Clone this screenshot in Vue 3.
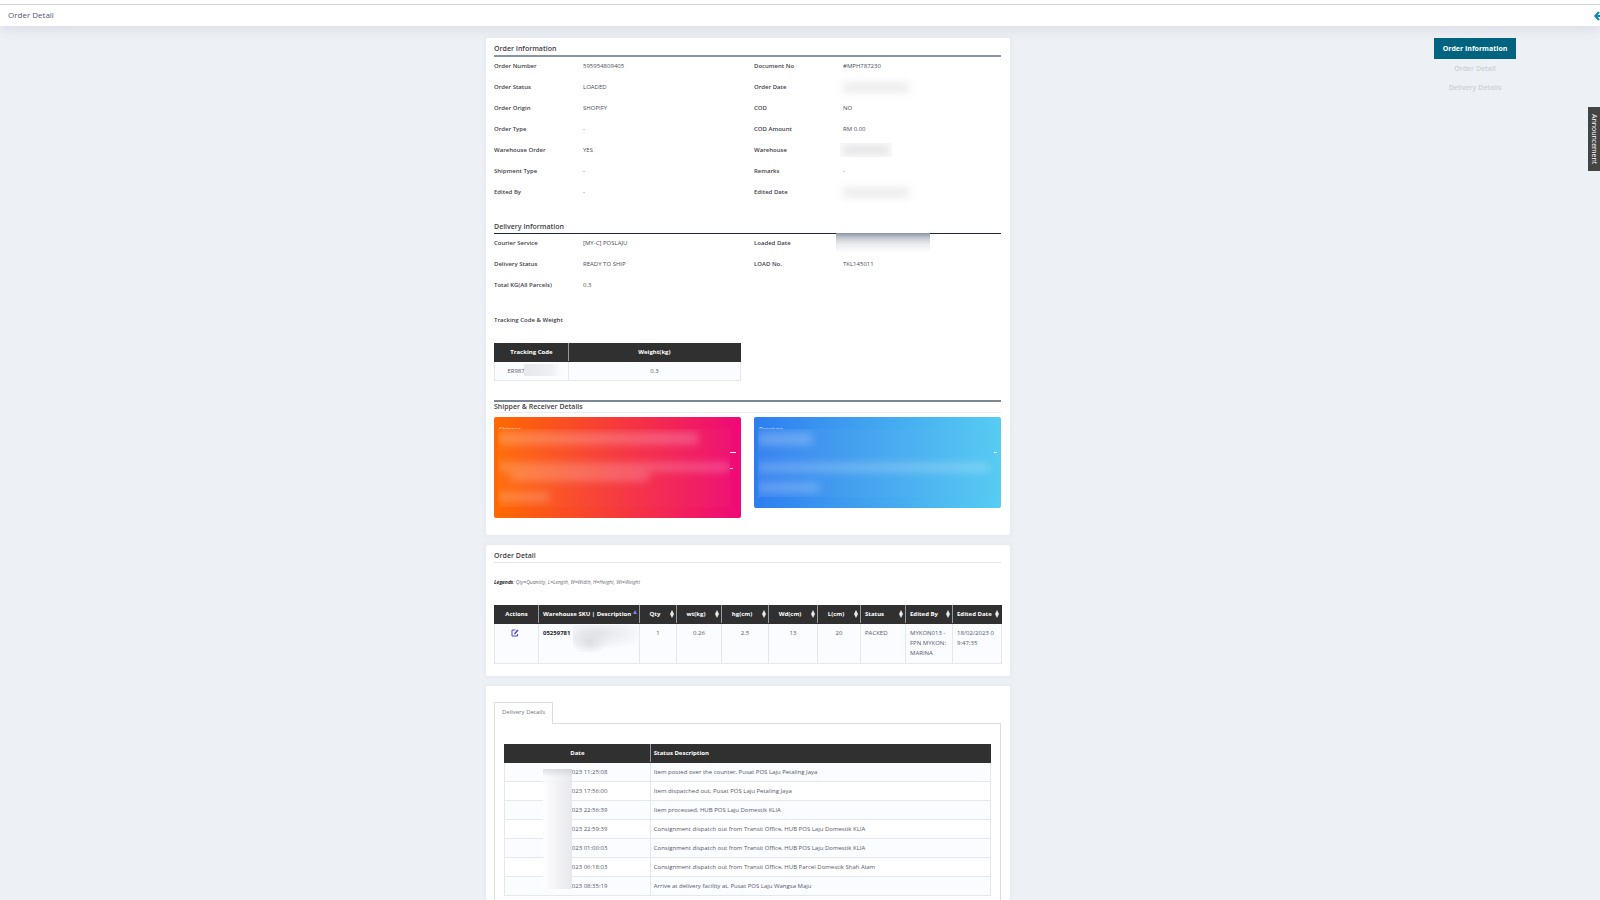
<script setup>
const orderLeft = [
  ['Order Number', '595954809405'],
  ['Order Status', 'LOADED'],
  ['Order Origin', 'SHOPIFY'],
  ['Order Type', '-'],
  ['Warehouse Order', 'YES'],
  ['Shipment Type', '-'],
  ['Edited By', '-'],
]
const orderRight = [
  ['Document No', '#MPH787230'],
  ['Order Date', null, 'wide'],
  ['COD', 'NO'],
  ['COD Amount', 'RM 0.00'],
  ['Warehouse', null, 'short'],
  ['Remarks', '-'],
  ['Edited Date', null, 'wide'],
]
const deliveryLeft = [
  ['Courier Service', '[MY-C] POSLAJU'],
  ['Delivery Status', 'READY TO SHIP'],
  ['Total KG(All Parcels)', '0.3'],
]
const deliveryRight = [
  ['Loaded Date', null, 'shade'],
  ['LOAD No.', 'TKL145011'],
]
const columns = ['Qty', 'wt(kg)', 'hg(cm)', 'Wd(cm)', 'L(cm)', 'Status', 'Edited By', 'Edited Date']
const values = ['1', '0.26', '2.5', '13', '20', 'PACKED', 'MYKON013 - FPN MYKON: MARINA', '18/02/2023 09:47:35']
const events = [
  ['023 11:25:08', 'Item posted over the counter, Pusat POS Laju Petaling Jaya'],
  ['023 17:56:00', 'Item dispatched out, Pusat POS Laju Petaling Jaya'],
  ['023 22:56:39', 'Item processed, HUB POS Laju Domestik KLIA'],
  ['023 22:59:39', 'Consignment dispatch out from Transit Office, HUB POS Laju Domestik KLIA'],
  ['023 01:00:03', 'Consignment dispatch out from Transit Office, HUB POS Laju Domestik KLIA'],
  ['023 06:18:03', 'Consignment dispatch out from Transit Office, HUB Parcel Domestik Shah Alam'],
  ['023 08:35:19', 'Arrive at delivery facility at, Pusat POS Laju Wangsa Maju'],
]
</script>

<template>
  <div class="page">
    <header class="topbar">
      <h1>Order Detail</h1>
      <a href="#" class="back" aria-label="Back">
        <svg viewBox="0 0 10 10"><path d="M5 1 1.4 5 5 9M1.6 5H10" fill="none" stroke="currentColor" stroke-width="2.2" /></svg>
      </a>
    </header>

    <div class="layout">
      <main>
        <section class="card info">
          <h2 class="thick">Order Information</h2>
          <div class="pair">
            <dl v-for="(list, i) in [orderLeft, orderRight]" :key="i">
              <div v-for="row in list" :key="row[0]">
                <dt>{{ row[0] }}</dt>
                <dd>{{ row[1] }}<span v-if="row[2]" class="mask" :class="row[2]"></span></dd>
              </div>
            </dl>
          </div>

          <h2 class="thin">Delivery Information</h2>
          <div class="pair">
            <dl v-for="(list, i) in [deliveryLeft, deliveryRight]" :key="i">
              <div v-for="row in list" :key="row[0]">
                <dt>{{ row[0] }}</dt>
                <dd>{{ row[1] }}<span v-if="row[2]" class="mask" :class="row[2]"></span></dd>
              </div>
            </dl>
          </div>

          <h3>Tracking Code &amp; Weight</h3>
          <div class="pair">
            <table class="tracking">
              <thead><tr><th>Tracking Code</th><th>Weight(kg)</th></tr></thead>
              <tbody><tr><td><span class="code">ER987<span class="mask tail"></span></span></td><td>0.3</td></tr></tbody>
            </table>
          </div>

          <h2 class="people">Shipper &amp; Receiver Details</h2>
          <div class="pair parties">
            <div class="party shipper">
              <h4>Shipper</h4>
              <div class="veil"><i class="s1"></i><i class="s2"></i><i class="s3"></i><i class="s4"></i></div>
              <span class="dash"></span><span class="dots"></span>
            </div>
            <div class="party receiver">
              <h4>Receiver</h4>
              <div class="veil"><i class="r1"></i><i class="r2"></i><i class="r3"></i></div>
              <span class="dash"></span>
            </div>
          </div>
        </section>

        <section class="card detail">
          <h2 class="light">Order Detail</h2>
          <p class="legend"><b>Legends</b>: Qty=Quantity, L=Length, W=Width, H=Height, Wt=Weight</p>
          <table class="items">
            <colgroup><col class="c0" /><col class="c1" /><col class="c2" /><col class="c3" /><col class="c4" /><col class="c5" /><col class="c6" /><col class="c7" /><col class="c8" /><col class="c9" /></colgroup>
            <thead>
              <tr>
                <th>Actions</th>
                <th class="left"><span class="head"><span>Warehouse SKU | Description</span><svg class="asc" viewBox="0 0 4 8"><path d="M0 4 2 0 4 4z" /></svg></span></th>
                <th v-for="(c, i) in columns" :key="c" :class="{ left: i > 4 }">
                  <span class="head"><span>{{ c }}</span><svg viewBox="0 0 4 8"><path d="M0 4 2 0 4 4 2 8z" /></svg></span>
                </th>
              </tr>
            </thead>
            <tbody>
              <tr>
                <td>
                  <button class="edit" aria-label="Edit">
                    <svg viewBox="0 0 16 16"><path d="M9 2H2v12h11V10" /><path d="M7 10 14 2" class="pen" /></svg>
                  </button>
                </td>
                <td class="left sku"><b>05259781</b><span class="mask blob"></span></td>
                <td v-for="(v, i) in values" :key="i" :class="{ left: i > 4 }">{{ v }}</td>
              </tr>
            </tbody>
          </table>
        </section>

        <section class="card delivery">
          <div role="tablist"><button role="tab" class="tab" aria-selected="true">Delivery Details</button></div>
          <div class="pane" role="tabpanel">
            <div class="log">
              <table>
                <colgroup><col class="when" /><col /></colgroup>
                <thead><tr><th>Date</th><th class="left">Status Description</th></tr></thead>
                <tbody>
                  <tr v-for="e in events" :key="e[0]"><td><span class="stamp">{{ e[0] }}</span></td><td class="left">{{ e[1] }}</td></tr>
                </tbody>
              </table>
              <span class="mask column"></span>
            </div>
          </div>
        </section>
      </main>

      <nav>
        <a href="#" class="active">Order Information</a>
        <a href="#">Order Detail</a>
        <a href="#">Delivery Details</a>
      </nav>
    </div>
    <button class="announce">Announcement</button>
  </div>
</template>

<style>
body { margin: 0; background: #edf1f6; }
</style>

<style scoped>
* { box-sizing: border-box; }
.page {
  position: relative; min-height: 100vh; display: flex; flex-direction: column; overflow: hidden;
  font: 6px/10px "Open Sans", "Noto Sans", sans-serif; color: #55586c; background: #edf1f6;
}
h1, h2, h3, h4, p, dl, dd { margin: 0; font-weight: 400; }
button { font: inherit; border: 0; padding: 0; cursor: pointer; }
a { text-decoration: none; }
.topbar {
  display: flex; align-items: center; justify-content: space-between; height: 22px; margin-top: 4px;
  padding-left: 8px; background: #fff; border-top: 1px solid #d4d4d6; box-shadow: 0 -4px #fff, 0 2px 14px rgba(70, 60, 80, .14);
}
h1 { font-size: 8px; color: #55567a; padding-bottom: 2px; }
.back { width: 6px; height: 10px; color: #0a8bb0; overflow: hidden; }
.back svg { display: block; width: 10px; height: 10px; }
.layout { flex: 1; display: grid; grid-template-columns: 486fr 524fr 465fr 125fr; padding-top: 12px; }
main { grid-column: 2; display: flex; flex-direction: column; gap: 10px; min-width: 0; }
.card { background: #fff; border-radius: 2px; padding: 0 9px 0 8px; box-shadow: 0 0 6px rgba(80, 90, 120, .07); }
h2 { font-size: 7px; line-height: 10px; font-weight: 600; color: #3f4047; }
.info { padding-top: 6px; padding-bottom: 17px; }
.thick { padding-bottom: 1px; border-bottom: 2px solid #8796a4; }
.thin { margin-top: 18px; padding-bottom: 1px; border-bottom: 1px solid #1b2a3f; }
.pair { display: grid; grid-template-columns: 1fr 1fr; column-gap: 13px; align-items: start; }
dl > div { display: grid; grid-template-columns: 89fr 158fr; height: 21px; padding-top: 4px; }
dt { font-weight: 600; color: #3f414a; white-space: nowrap; }
dd { position: relative; color: #4b4d57; }
.mask { position: absolute; pointer-events: none; }
.wide { left: 0; top: 1px; width: 66px; height: 9px; background: #e9e9eb; filter: blur(4px); }
.short { left: -3px; top: -2px; width: 52px; height: 14px; background: #f8f8f9; overflow: hidden; }
.short::after { content: ""; display: block; margin: 3px 4px; height: 8px; background: #e5e5e7; filter: blur(3px); }
.shade { left: -7px; top: -5px; width: 94px; height: 20px; background: linear-gradient(#8994a3, #c5cad1 25%, #e9ebed 55%, #fff); }
h3 { margin-top: 18px; margin-bottom: 18px; font-size: 6px; font-weight: 600; color: #3f414a; }
table { width: 100%; border-collapse: collapse; table-layout: fixed; }
th { height: 18px; padding: 0 4px 2px; background: #303030; color: #fff; font-weight: 700; border: 1px solid #303030; border-right-color: #97999d; border-left-color: #97999d; white-space: nowrap; }
th:first-child { border-left-color: #303030; }
th:last-child { border-right-color: #303030; }
td { height: 19px; padding: 0 4px 1px; border: 1px solid #e3e7ee; text-align: center; background: #fafcff; }
.left { text-align: left; }
.tracking th:first-child { width: 30%; }
.code { position: relative; display: inline-block; width: 48px; text-align: left; }
.tail { left: 17px; top: -2px; width: 38px; height: 12px; background: linear-gradient(90deg, #e7e8eb, #eeeff1 70%, #fafcff); }
.people { margin-top: 19px; border-top: 2px solid #7b8894; border-bottom: 1px solid #ececee; margin-bottom: 4px; }
.party { position: relative; height: 91px; padding: 7px 5px; border-radius: 2px; overflow: hidden; background: linear-gradient(90deg, #2d7ef0, #3d9aef 35%, #56cdf2); }
.party h4 { font-size: 6px; line-height: 10px; color: rgba(255, 255, 255, .8); }
.shipper { height: 101px; background: linear-gradient(90deg, #ff6a00, #f6393c 50%, #ee0979); }
.veil { position: absolute; left: 4px; right: 11px; top: 12px; bottom: 11px; background: linear-gradient(90deg, #ff6e0c, #f63c41 50%, #ef1374); overflow: hidden; }
.receiver .veil { right: 7px; background: linear-gradient(90deg, #3983f0, #439cef 35%, #56c9f2); }
.veil i { position: absolute; left: 0; background: rgba(255, 255, 255, .24); filter: blur(4px); }
.s1 { top: 4px; width: 86%; height: 11px; }
.s2 { top: 34px; width: 100%; height: 8px; }
.s3 { top: 43px; width: 60%; height: 9px; margin-left: 12px; }
.s4 { top: 64px; width: 22%; height: 8px; }
.r1 { top: 4px; width: 23%; height: 12px; }
.r2 { top: 34px; width: 98%; height: 9px; }
.r3 { top: 54px; width: 26%; height: 9px; }
.dash { position: absolute; right: 5px; top: 35px; width: 6px; height: 1px; background: #fff; }
.receiver .dash { right: 4px; width: 3px; }
.dots { position: absolute; right: 8px; top: 51px; width: 3px; height: 1px; background: #ffc4e0; }
.detail { padding-top: 6px; padding-bottom: 12px; }
.light { padding-bottom: 1px; border-bottom: 1px solid #e3e4e9; }
.legend { margin: 14px 0 18px; font-size: 5px; font-style: italic; color: #6a6c77; }
.legend b { color: #25262b; }
.items td { height: 40px; padding-top: 4px; vertical-align: top; }
.c0 { width: 44px; } .c1 { width: 101px; } .c2 { width: 37px; } .c3 { width: 45px; } .c4 { width: 47px; }
.c5 { width: 49px; } .c6 { width: 43px; } .c7 { width: 45px; } .c8 { width: 47px; } .c9 { width: 49px; }
.items th { padding: 0 0 2px; }
.items th.left { padding-left: 4px; }
.head { display: flex; align-items: center; padding-right: 2px; }
.head > span { flex: 1; }
.head svg { width: 4px; height: 8px; fill: #e8e8ea; flex: none; }
.head .asc { fill: #7b7df0; }
.items td.left { word-break: break-all; padding-right: 2px; }
.items td:nth-child(9) { word-break: normal; }
.items td:last-child { padding-right: 7px; }
.edit { width: 8px; height: 8px; background: none; display: block; margin: 1px auto 0 12px; }
.edit svg { display: block; width: 8px; height: 8px; fill: none; stroke: #4a48d8; stroke-width: 2; }
.edit .pen { stroke-width: 3; }
.sku { position: relative; }
.sku b { color: #25262b; }
.blob { left: 34px; top: 1px; width: 66px; height: 27px; background: radial-gradient(ellipse 30% 50% at 25% 60%, #dcdee3, transparent), radial-gradient(ellipse 75% 60% at 40% 30%, #e3e5e9, #fafcff); }
.delivery { flex: 1; display: flex; flex-direction: column; padding-top: 16px; }
.tab { position: relative; display: block; height: 22px; padding: 0 7px 3px; margin-bottom: -1px; color: #74767f; background: #fff; border: 1px solid #dcdde1; border-bottom: 0; border-radius: 1px 1px 0 0; }
.pane { flex: 1; padding: 20px 9px 0; border: 1px solid #dcdde1; border-bottom: 0; }
.log { position: relative; }
.when { width: 30%; }
.log tbody tr:nth-child(even) td { background: #fff; }
.log td { padding: 0 3px 1px; }
.log th { padding: 0 3px 2px; }
.stamp { display: inline-block; width: 60px; text-align: right; }
.column { left: 39px; top: 25px; width: 29px; height: 120px; background: linear-gradient(rgba(190, 194, 202, .5), transparent 8px), linear-gradient(90deg, #fdfdfe, #e6e8ec); }
nav { grid-column: 4; display: flex; flex-direction: column; margin-left: -41px; width: 82px; text-align: center; line-height: 19px; font-size: 7px; font-weight: 600; }
nav a { color: #ccd0d5; }
nav .active { line-height: 21px; background: #00637f; color: #fff; font-weight: 700; }
.announce { position: absolute; right: 0; top: 107px; width: 12px; height: 64px; writing-mode: vertical-rl; background: #444; color: #fff; font-size: 7px; line-height: 12px; }
</style>
